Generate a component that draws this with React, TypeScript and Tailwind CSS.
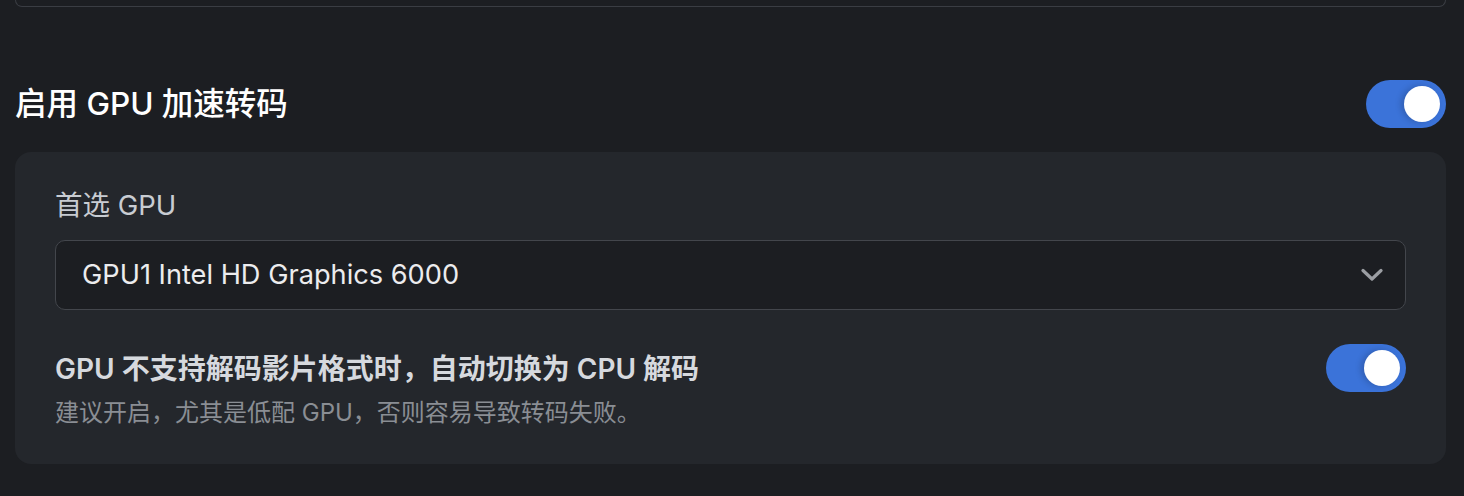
import React, { useState } from 'react';

interface ToggleProps {
  checked: boolean;
  onChange: (v: boolean) => void;
}

const Toggle: React.FC<ToggleProps> = ({ checked, onChange }) => (
  <button
    type="button"
    role="switch"
    aria-checked={checked}
    onClick={() => onChange(!checked)}
    className={
      'flex h-[48px] w-[80px] shrink-0 items-center rounded-full p-[6px] transition-colors ' +
      (checked ? 'justify-end bg-[#3b73d9]' : 'justify-start bg-[#4a4d53]')
    }
  >
    <span className="block h-[36px] w-[36px] rounded-full bg-white shadow-[-3px_0_6px_rgba(0,0,0,0.18)]" />
  </button>
);

const App: React.FC = () => {
  const [gpuEnabled, setGpuEnabled] = useState(true);
  const [cpuFallback, setCpuFallback] = useState(true);

  return (
    <div className="h-[496px] w-full overflow-hidden bg-[#1c1e22] pl-[15px] pr-[18px] font-[Inter,'Noto_Sans_CJK_SC',sans-serif]">
      {/* tail of the previous card */}
      <div className="h-[7px] rounded-b-[12px] border border-t-0 border-[#3a3d43]" />

      {/* GPU section header */}
      <div className="mt-[73px] flex items-center justify-between">
        <h2 className="text-[31.5px] font-medium leading-[48px] text-white">启用 GPU 加速转码</h2>
        <Toggle checked={gpuEnabled} onChange={setGpuEnabled} />
      </div>

      <div className="mt-[24px] rounded-[16px] bg-[#24272c] px-[40px] pb-[35px] pt-[33px]">
        <p className="text-[27.5px] leading-[40px] text-[#c8ccd2]">首选 GPU</p>

        <div className="mt-[15px] flex h-[70px] items-center justify-between rounded-[10px] border border-[#43464c] bg-[#1c1e22] pl-[26px] pr-[22px]">
          <span className="text-[27.2px] leading-[40px] text-[#ececee]">GPU1 Intel HD Graphics 6000</span>
          <svg width="22" height="14" viewBox="0 0 22 14" fill="none">
            <polyline
              points="2,2.5 11,11 20,2.5"
              stroke="#9b9ea3"
              strokeWidth="3.2"
              strokeLinecap="round"
              strokeLinejoin="round"
            />
          </svg>
        </div>

        <div className="mt-[34px] flex items-start justify-between">
          <div className="pt-[5px]">
            <p className="text-[28px] font-semibold leading-[40px] text-[#d6d9de]">
              GPU 不支持解码影片格式时，自动切换为 CPU 解码
            </p>
            <p className="mt-[8px] text-[24px] leading-[32px] text-[#8a8e94]">
              建议开启，尤其是低配 GPU，否则容易导致转码失败。
            </p>
          </div>
          <Toggle checked={cpuFallback} onChange={setCpuFallback} />
        </div>
      </div>
    </div>
  );
};

export default App;
